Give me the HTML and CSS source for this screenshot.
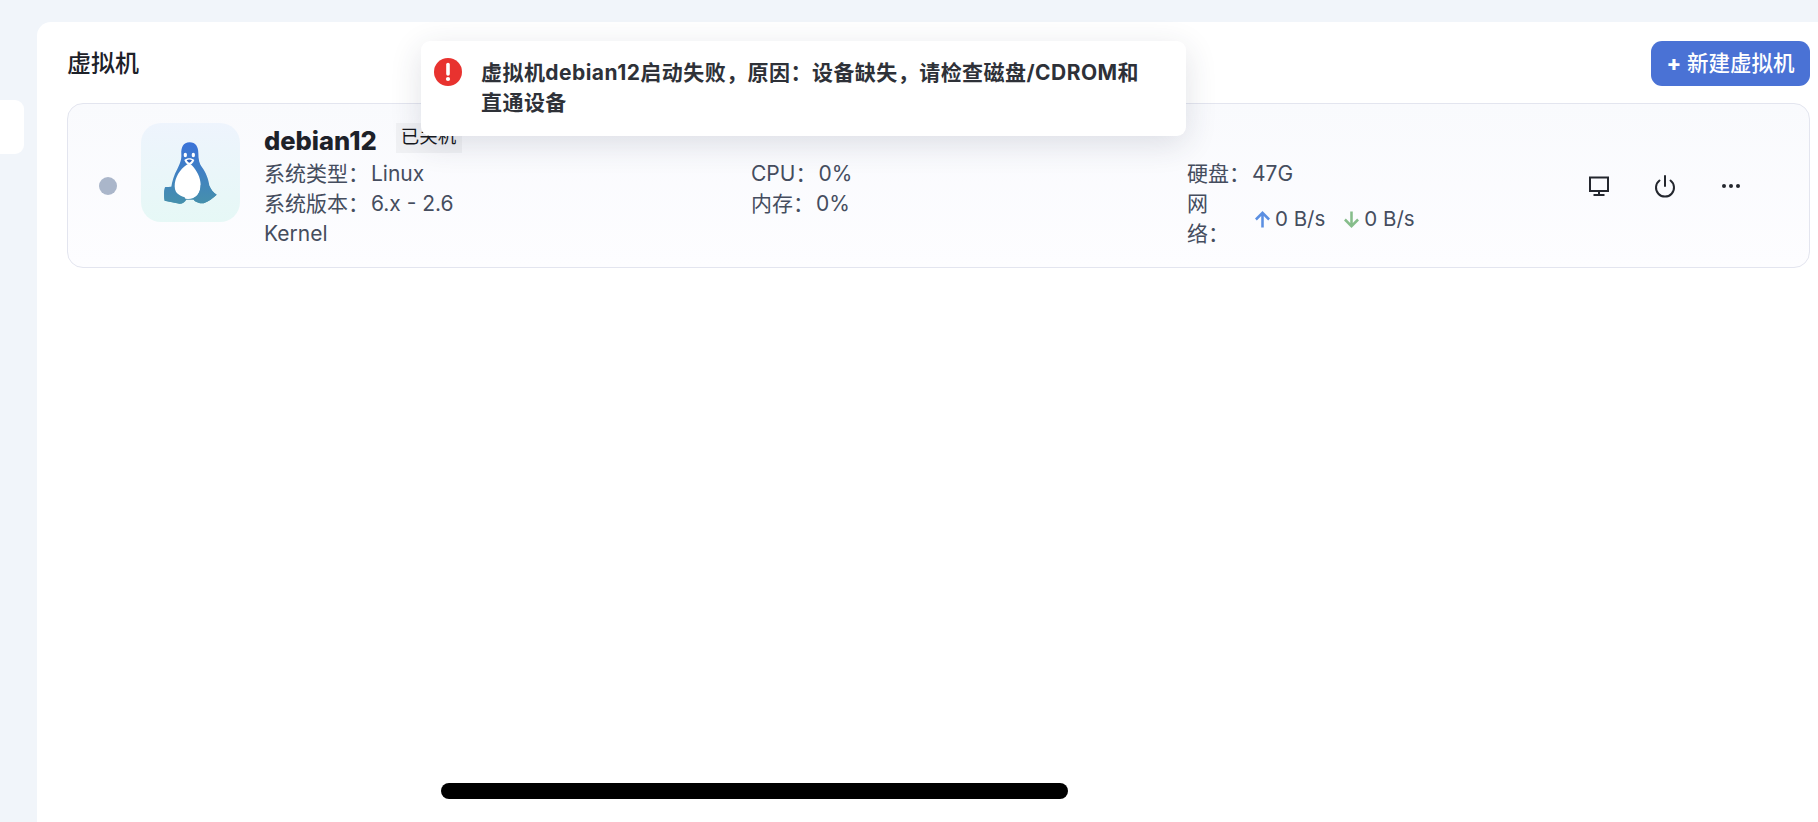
FILE: index.html
```html
<!DOCTYPE html>
<html lang="zh-CN">
<head>
<meta charset="utf-8">
<title>虚拟机</title>
<link rel="stylesheet" href="styles.css">
</head>
<body>
<div class="page">
  <aside class="sidebar"><div class="side-tab"></div></aside>
  <main class="panel">
    <header class="panel-head">
      <h1 class="panel-title">虚拟机</h1>
      <button class="new-btn"><span class="plus">+</span> 新建虚拟机</button>
    </header>
    <section class="vm-card">
      <span class="status-dot"></span>
      <div class="os-box">
        <svg class="tux" viewBox="100 76 165 192" width="55" height="64">
          <defs>
            <linearGradient id="tuxg" gradientUnits="userSpaceOnUse" x1="0" y1="80" x2="0" y2="264">
              <stop offset="0" stop-color="#3a72d8"/>
              <stop offset="1" stop-color="#4690ac"/>
            </linearGradient>
          </defs>
          <path fill="url(#tuxg)" d="M180 80C160 80 154 96 155 115C156 135 150 145 143 160C133 178 127 198 125 213L106 215C102 230 103 245 105 255L150 264C160 264 166 258 170 252L192 252C196 258 205 263 222 263C236 258 250 247 261 237C251 230 244 222 239 210C237 193 229 170 217 155C209 145 206 130 206 112C206 94 198 80 180 80Z"/>
          <path fill="#fff" d="M170 148C152 160 135 185 135 212C135 236 155 250 175 250C198 250 213 233 213 207C213 184 200 163 188 150C182 144 176 144 170 148Z"/>
          <path fill="url(#tuxg)" d="M106 215L130 213C133 228 146 238 165 245L168 252C164 260 158 264 150 264L105 255C103 245 102 230 106 215Z"/>
          <path fill="url(#tuxg)" d="M213 207C222 212 231 205 239 210C244 222 251 230 261 237C250 247 236 258 222 263C208 263 197 258 192 252L195 245C205 240 212 228 213 207Z"/>
          <ellipse cx="167" cy="118" rx="5" ry="7" fill="#fff"/>
          <ellipse cx="191" cy="118" rx="5" ry="7" fill="#fff"/>
          <path fill="#fff" d="M164 133C172 126 186 126 194 133C190 143 184 148 179 148C174 148 168 143 164 133Z"/>
          <path fill="#2f62b8" d="M171 134C176 131 182 131 187 134C184 139 181 141 179 141C177 141 174 139 171 134Z"/>
        </svg>
      </div>
      <div class="vm-info">
        <div class="vm-name-row">
          <span class="vm-name">debian12</span>
          <span class="vm-tag">已关机</span>
        </div>
        <div class="vm-cols">
          <div class="col col-system">
            <p class="line"><span class="key">系统类型：</span>Linux</p>
            <p class="line"><span class="key">系统版本：</span>6.x - 2.6 Kernel</p>
          </div>
          <div class="col col-usage">
            <p class="line"><span class="key">CPU：</span>0%</p>
            <p class="line"><span class="key">内存：</span>0%</p>
          </div>
          <div class="col col-io">
            <p class="line"><span class="key">硬盘：</span>47G</p>
            <div class="net-row">
              <span class="net-label">网络：</span>
              <span class="rate">
                <svg class="arrow" viewBox="0 0 16 16" width="17" height="17"><path d="M8 15.500V2M1.800 8l6.200-6.200 6.200 6.200" fill="none" stroke="#5b8fe2" stroke-width="2.400"/></svg>
                0 B/s
              </span>
              <span class="rate">
                <svg class="arrow" viewBox="0 0 16 16" width="17" height="17"><path d="M8 .5V14M1.800 8l6.200 6.200 6.200-6.200" fill="none" stroke="#86bd8b" stroke-width="2.400"/></svg>
                0 B/s
              </span>
            </div>
          </div>
        </div>
      </div>
      <div class="vm-actions">
        <svg class="act" viewBox="0 0 24 24" width="24" height="24"><path d="M3 3.500h18v13.500H3z" fill="none" stroke="#24272e" stroke-width="2"/><path d="M12 17v4M6.500 21h11" fill="none" stroke="#24272e" stroke-width="2"/></svg>
        <svg class="act" viewBox="0 0 24 24" width="24" height="24"><path d="M12 2v10M6.500 6.500a9 9 0 1 0 11 0" fill="none" stroke="#24272e" stroke-width="2" stroke-linecap="round"/></svg>
        <svg class="act" viewBox="0 0 24 24" width="24" height="24"><circle cx="5" cy="12" r="2" fill="#24272e"/><circle cx="12" cy="12" r="2" fill="#24272e"/><circle cx="19" cy="12" r="2" fill="#24272e"/></svg>
      </div>
    </section>
  </main>
</div>
<div class="toast">
  <svg class="toast-icon" viewBox="0 0 28 28" width="28" height="28"><circle cx="14" cy="14" r="14" fill="#e8322f"/><path d="M14 6.500v9.500" stroke="#fff" stroke-width="3.600" stroke-linecap="round"/><circle cx="14" cy="21" r="2.100" fill="#fff"/></svg>
  <p class="toast-text">虚拟机debian12启动失败，原因：设备缺失，请检查磁盘/CDROM和直通设备</p>
</div>
<div class="home-bar"></div>
</body>
</html>
```
FILE: styles.css
```css
* { box-sizing: border-box; }
html, body { margin: 0; height: 100%; }
body {
  background: #f1f5fa;
  font-family: Inter, "Noto Sans CJK SC", sans-serif;
  color: #454d5e;
  overflow: hidden;
  position: relative;
}
.page { display: flex; height: 822px; }
.sidebar { width: 37px; flex: none; padding-top: 100px; }
.side-tab { width: 24px; height: 54px; background: #fff; border-radius: 0 9px 9px 0; }
.panel {
  flex: 1;
  margin-top: 22px;
  background: #fff;
  border-radius: 14px 0 0 0;
  padding: 19px 8px 0 30px;
}
.panel-head { display: flex; justify-content: space-between; align-items: center; height: 45px; margin-bottom: 17px; }
.panel-title { margin: 0; font-size: 24px; line-height: 45px; font-weight: 500; color: #1d2129; }
.new-btn {
  width: 159px;
  height: 45px;
  border: 0;
  border-radius: 11px;
  background: #4a72d5;
  color: #fff;
  font: 500 21.5px/45px Inter, "Noto Sans CJK SC", sans-serif;
  padding: 0;
}
.plus { font-weight: 800; }
.vm-card {
  display: flex;
  align-items: flex-start;
  height: 165px;
  padding: 19px 0 0 31px;
  border: 1px solid #e3e5ef;
  border-radius: 16px;
  background: linear-gradient(180deg, #f9fafd, #fdfdff);
}
.status-dot { flex: none; width: 18px; height: 18px; margin-top: 54px; border-radius: 50%; background: #aab6ca; }
.os-box {
  flex: none;
  width: 99px;
  height: 99px;
  margin-left: 24px;
  border-radius: 20px;
  background: linear-gradient(180deg, #eef4fd, #e6f8f6);
  display: flex;
  align-items: center;
  justify-content: center;
}
.vm-info { flex: 1; margin-left: 24px; min-width: 0; }
.vm-name-row { display: flex; align-items: flex-start; height: 36px; }
.vm-name { margin-top: 3px; font-size: 25.5px; line-height: 30px; font-weight: 800; color: #1d2129; }
.vm-tag {
  margin-left: 19px;
  height: 30px;
  padding: 0 6px 0 5px;
  background: #f0f1f4;
  color: #16181d;
  font-size: 18.5px;
  line-height: 26px;
}
.vm-cols { display: flex; font-size: 21px; line-height: 30px; }
.line { margin: 0; }
.key { margin-right: 2px; }
.col-system { width: 487px; }
.col-system .line { width: 215px; }
.col-usage { width: 436px; }
.col-io { flex: 1; }
.net-row { display: flex; align-items: center; }
.net-label { width: 46px; margin-right: 21px; }
.rate { display: flex; align-items: center; gap: 4px; margin-right: 18px; font-size: 20.5px; }
.vm-actions { flex: none; display: flex; gap: 42px; margin: 51px 66px 0 0; }
.act { display: block; }
.toast {
  position: absolute;
  left: 421px;
  top: 41px;
  width: 765px;
  height: 95px;
  padding: 17px 0 0 13px;
  display: flex;
  align-items: flex-start;
  gap: 19px;
  background: #fff;
  border-radius: 9px;
  box-shadow: 0 8px 32px rgba(40, 50, 80, .14);
}
.toast-icon { flex: none; }
.toast-text { margin: 0; width: 672px; font-size: 21px; letter-spacing: .45px; line-height: 30px; font-weight: 700; color: #2e3138; }
.home-bar {
  position: absolute;
  left: 441px;
  top: 783px;
  width: 627px;
  height: 16px;
  border-radius: 8px;
  background: #000;
}
```
